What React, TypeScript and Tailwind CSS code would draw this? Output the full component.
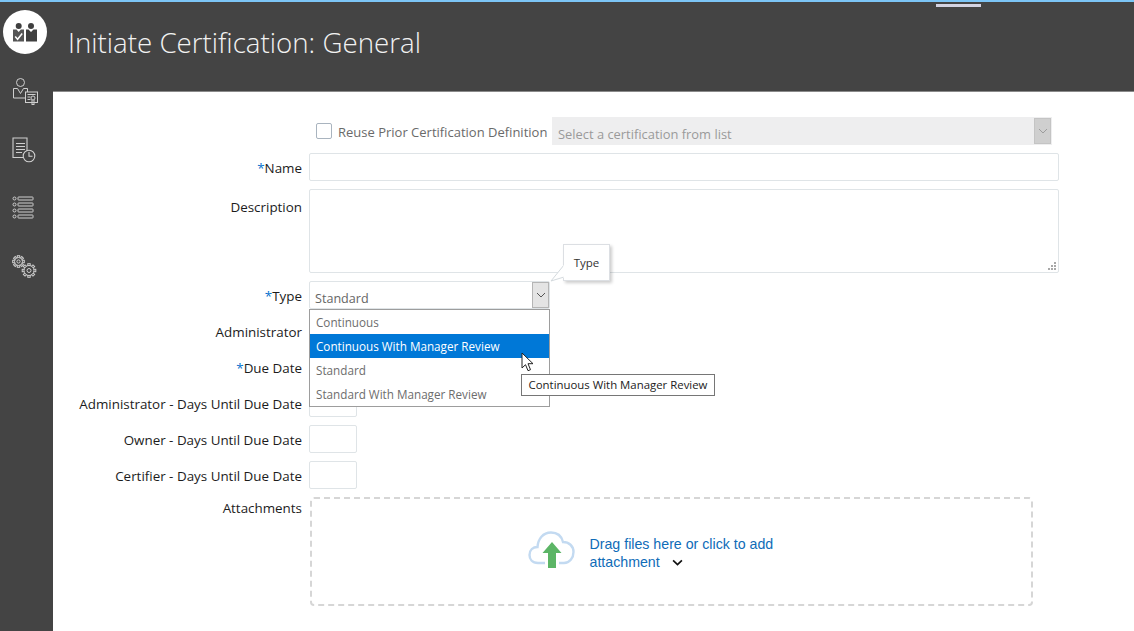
import React from "react";

const font = { fontFamily: '"Open Sans", "Noto Sans", sans-serif' };

function LogoIcon() {
  return (
    <svg width="26" height="26" viewBox="0 0 26 26">
      <circle cx="6.700" cy="7" r="3" fill="#3f3f3f" />
      <circle cx="19" cy="7" r="3" fill="#3f3f3f" />
      <path d="M1 10.500h3.500l2.200 2.500 2.200-2.500h3.100v12h-11z" fill="#555" />
      <path d="M14 10.500h2.500l2.500 2.500 2.500-2.500h3.500v12h-11z" fill="#3f3f3f" />
      <path d="M3.200 17.500l2.400 2.800 4.600-5.800" fill="none" stroke="#fff" strokeWidth="1.500" />
    </svg>
  );
}

function UserCertIcon() {
  return (
    <svg width="27" height="28" viewBox="0 0 27 28" fill="none" stroke="#cfcfcf" strokeWidth="1">
      <circle cx="8.500" cy="4.500" r="4" />
      <path d="M13 20H1.500v-9.500h4l3 5 3-5h4v3.500" />
      <rect x="13.500" y="14" width="12" height="10.500" fill="#444" />
      <path d="M15.500 16.500h8M15.500 19h3M15.500 21.500h3" />
      <circle cx="21" cy="20" r="2" fill="#444" />
      <path d="M20 22v5l1-1 1 1v-5" />
    </svg>
  );
}

function DocClockIcon() {
  return (
    <svg width="25" height="26" viewBox="0 0 25 26" fill="none" stroke="#cfcfcf" strokeWidth="1.100">
      <path d="M11 20.500H1V1h14v13" />
      <path d="M4 6.500h9M4 9.500h9M4 12.500h9M4 15.500h6" />
      <circle cx="17" cy="19" r="5.800" fill="#444" />
      <path d="M17 15v4.300h3.500" />
    </svg>
  );
}

function ListIcon() {
  const ys = [1, 7, 13, 19];
  return (
    <svg width="22" height="24" viewBox="0 0 22 24" fill="none" stroke="#cfcfcf" strokeWidth="1">
      {ys.map((y) => (
        <g key={y}>
          <circle cx="2.500" cy={y + 1.500} r="1.500" />
          <rect x="6" y={y} width="15" height="3" rx="0.500" />
        </g>
      ))}
    </svg>
  );
}

function Gear({ cx, cy, r }: { cx: number; cy: number; r: number }) {
  const teeth = Array.from({ length: 8 }, (_, i) => (i * 360) / 8);
  return (
    <g>
      {teeth.map((a) => (
        <rect key={a} x={cx - 1.200} y={cy - r - 1.800} width="2.400" height="2.400" transform={`rotate(${a} ${cx} ${cy})`} />
      ))}
      <circle cx={cx} cy={cy} r={r} fill="#444" />
      <circle cx={cx} cy={cy} r={r * 0.400} />
    </g>
  );
}

function GearsIcon() {
  return (
    <svg width="26" height="24" viewBox="0 0 26 24" fill="none" stroke="#cfcfcf" strokeWidth="1">
      <Gear cx={6.500} cy={6.500} r={4} />
      <Gear cx={17} cy={15.500} r={5} />
    </svg>
  );
}

function Chevron({ color = "#555", big }: { color?: string; big?: boolean }) {
  return (
    <svg width={big ? 11 : 10} height={big ? 7 : 6} viewBox="0 0 10 6" fill="none" stroke={color} strokeWidth={big ? 1.500 : 1}>
      <path d="M1 1l4 4 4-4" />
    </svg>
  );
}

function CloudIcon() {
  return (
    <svg className="mb-[3px]" width="48" height="40" viewBox="0 0 48 40">
      <path
        d="M17 33H10C4 33 1.500 29 1.500 25 1.500 20 5 17 9.500 17 10 9 15 2.500 23 2.500c6 0 10.500 3.500 12 9.500 6 0 10.500 4 10.500 10 0 6-4 11-9.500 11H31"
        fill="none"
        stroke="#c3daf1"
        strokeWidth="2.400"
      />
      <path d="M24 12l9.500 11H28v15h-8V23h-5.500z" fill="#5cb566" />
    </svg>
  );
}

function Cursor() {
  return (
    <svg width="14" height="21" viewBox="0 0 14 21">
      <path d="M1 1v15l3.500-3.300 2.500 6 2.500-1-2.500-6h5z" fill="#fff" stroke="#222" strokeWidth="1" />
    </svg>
  );
}

function ResizeGrip() {
  return (
    <svg width="9" height="9" viewBox="0 0 9 9" fill="#a8a8a8">
      <rect x="6" y="0" width="2" height="2" />
      <rect x="3" y="3" width="2" height="2" />
      <rect x="6" y="3" width="2" height="2" />
      <rect x="0" y="6" width="2" height="2" />
      <rect x="3" y="6" width="2" height="2" />
      <rect x="6" y="6" width="2" height="2" />
    </svg>
  );
}

function Row({ label, req, children, top, labelCls = "pt-[2px]" }: { label: string; req?: boolean; children?: React.ReactNode; top?: string; labelCls?: string }) {
  return (
    <div className={`flex gap-[7px] ${top ?? "items-center"}`}>
      <div className={`w-[249px] text-right text-[13.400px] leading-[20px] text-[#1c1c1c] whitespace-nowrap ${labelCls}`}>
        {req && <span className="text-[#0572ce]">*</span>}
        {label}
      </div>
      {children}
    </div>
  );
}

const fieldCls = "h-[28px] rounded-[2px] border border-[#dfe4e7] bg-white";

export default function App() {
  return (
    <div style={font} className="relative flex h-[631px] w-[1134px] flex-col overflow-hidden bg-white">
      <div className="h-[2px] bg-[#7cc5f6]" />
      <div className="flex min-h-0 flex-1">
        <aside className="flex w-[53px] shrink-0 flex-col bg-[#444444]">
          <div className="ml-[3px] mt-[8px] flex h-[44px] w-[44px] items-center justify-center rounded-full bg-white">
            <LogoIcon />
          </div>
          <div className="mt-[24px] flex flex-col pl-[12px]">
            <div className="h-[59px]"><UserCertIcon /></div>
            <div className="h-[59px]"><DocClockIcon /></div>
            <div className="h-[59px]"><ListIcon /></div>
            <div className="h-[59px]"><GearsIcon /></div>
          </div>
        </aside>
        <div className="flex min-w-0 flex-1 flex-col">
          <header className="flex h-[90px] shrink-0 items-start border-b border-[#8a8a8a] bg-[#444444] pl-[15px] pt-[18px]">
            <h1 className="text-[27.700px] font-light leading-[44px] text-[#f2f2f2]">Initiate Certification: General</h1>
          </header>
          <main className="flex flex-col gap-2 pt-[25px]">
            <div className="flex h-[28px] items-center pl-[263px]">
              <span className="h-[16px] w-[16px] shrink-0 rounded-[2px] border border-[#a9b4bf] bg-white" />
              <span className="ml-[6px] w-[209px] shrink-0 whitespace-nowrap pt-[3px] text-[13px] text-[#6a6a6a]">Reuse Prior Certification Definition</span>
              <div className="ml-[5px] flex h-[28px] w-[500px] items-center justify-between bg-[#eeeeef] pl-[6px] pr-[1px]">
                <span className="pt-[7px] text-[12.900px] text-[#9a9a9a]">Select a certification from list</span>
                <span className="flex h-[26px] w-[17px] items-center justify-center border border-[#c4c4c4] bg-[#cfcfcf]">
                  <Chevron color="#9c9c9c" />
                </span>
              </div>
            </div>
            <Row label="Name" req>
              <div className={`${fieldCls} w-[750px]`} />
            </Row>
            <Row label="Description" top="items-start" labelCls="pt-[8px]">
              <div className={`${fieldCls} flex h-[84px] w-[750px] items-end justify-end pb-[1px] pr-[1px]`}>
                <ResizeGrip />
              </div>
            </Row>
            <Row label="Type" req>
              <div className={`${fieldCls} flex w-[241px] items-center justify-between pl-[5px]`}>
                <span className="pt-[8px] text-[12.600px] text-[#666]">Standard</span>
                <span className="flex h-[26px] w-[17px] items-center justify-center border border-[#b5b5b5] bg-[#e4e4e4]">
                  <Chevron />
                </span>
              </div>
            </Row>
            <Row label="Administrator">
              <div className={`${fieldCls} w-[241px]`} />
            </Row>
            <Row label="Due Date" req>
              <div className={`${fieldCls} w-[241px]`} />
            </Row>
            <Row label="Administrator - Days Until Due Date">
              <div className={`${fieldCls} w-[48px]`} />
            </Row>
            <Row label="Owner - Days Until Due Date">
              <div className={`${fieldCls} w-[48px]`} />
            </Row>
            <Row label="Certifier - Days Until Due Date">
              <div className={`${fieldCls} w-[48px]`} />
            </Row>
            <Row label="Attachments" top="items-start" labelCls="pt-[1px]">
              <div className="ml-[1px] flex h-[109px] w-[723px] items-center justify-center rounded-[4px] border-2 border-dashed border-[#d6d6d6]">
                <div className="flex items-center gap-[14px] pr-[36px]" style={{ fontFamily: '"Liberation Sans", Arial, sans-serif' }}>
                  <CloudIcon />
                  <div className="mt-[2px] w-[190px] text-[14.200px] leading-[18px] text-[#0f6cb8]">
                    Drag files here or click to add attachment
                    <span className="ml-[12px] inline-block align-middle">
                      <Chevron color="#111" big />
                    </span>
                  </div>
                </div>
              </div>
            </Row>
          </main>
        </div>
      </div>

      {/* open listbox */}
      <div className="absolute left-[309px] top-[309px] w-[241px] border border-[#9d9d9d] bg-white text-[11.700px] text-[#6d6d6d]">
        <div className="flex h-[24px] items-center pl-[6px] pt-[2px]">Continuous</div>
        <div className="flex h-[24px] items-center bg-[#0078d7] pl-[6px] pt-[2px] text-white">Continuous With Manager Review</div>
        <div className="flex h-[24px] items-center pl-[6px] pt-[2px]">Standard</div>
        <div className="flex h-[24px] items-center pl-[6px] pt-[2px]">Standard With Manager Review</div>
      </div>

      {/* note window */}
      <div className="absolute left-[563px] top-[244px] flex h-[37px] w-[47px] items-center justify-center border border-[#dcdfe3] bg-white text-[11.500px] text-[#333] shadow-[2px_2px_3px_rgba(0,0,0,0.2)]">
        Type
      </div>
      <svg className="absolute left-[549px] top-[264px]" width="16" height="18" viewBox="0 0 16 18">
        <path d="M15 1L2 17l13-4" fill="#fff" stroke="#d4dade" strokeWidth="1" />
        <path d="M15.500 1v13" stroke="#fff" strokeWidth="2" />
      </svg>

      {/* hover tooltip */}
      <div className="absolute left-[521px] top-[374px] flex h-[22px] w-[194px] items-center justify-center border border-[#767676] bg-white text-[11.400px] text-[#222] whitespace-nowrap">
        Continuous With Manager Review
      </div>
      <div className="absolute left-[521px] top-[352px]">
        <Cursor />
      </div>

      {/* window drag handle */}
      <div className="absolute left-[936px] top-[4px] h-[3px] w-[45px] bg-[#d3d3e2]" />
    </div>
  );
}
